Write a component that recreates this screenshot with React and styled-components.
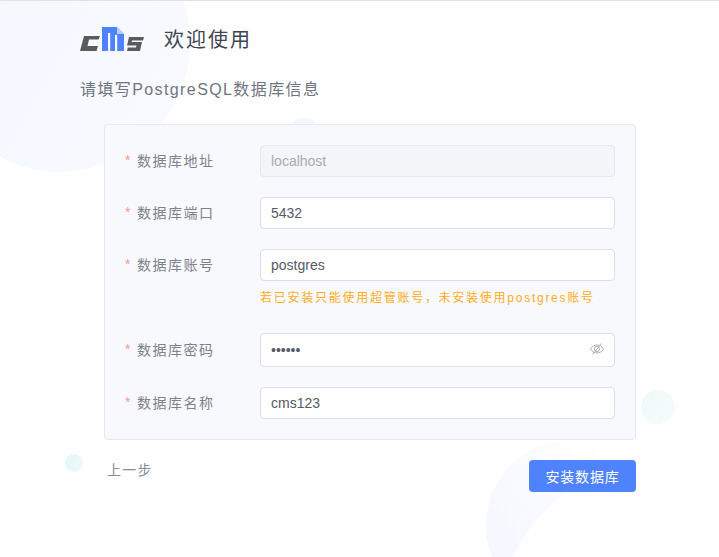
import React from "react";
import styled, { createGlobalStyle } from "styled-components";

const Global = createGlobalStyle`
  html, body { margin: 0; padding: 0; background: #fff; }
  body { font-family: "Liberation Sans", "Noto Sans CJK SC", sans-serif; }
  * { box-sizing: border-box; }
`;

const Page = styled.div`
  position: relative;
  width: 719px;
  height: 557px;
  overflow: hidden;
  background: #fff;
  border-top: 1px solid #e2e2e2;
`;

const Blob = styled.div`
  position: absolute;
  left: ${(p) => p.$x - p.$r}px;
  top: ${(p) => p.$y - p.$r - 1}px;
  width: ${(p) => p.$r * 2}px;
  height: ${(p) => p.$r * 2}px;
  border-radius: 50%;
  background: ${(p) => p.$bg};
`;

const Content = styled.div`
  position: relative;
  display: flex;
  flex-direction: column;
  padding: 24px 83px 0 80px;
`;

const Head = styled.header`
  display: flex;
  align-items: center;
  gap: 20px;
  height: 28px;
`;

const Title = styled.h1`
  margin: 2px 0 0;
  font-size: 20px;
  font-weight: 400;
  letter-spacing: 2px;
  color: #3f4450;
  line-height: 28px;
`;

const Sub = styled.h2`
  margin: 25px 0 0;
  font-size: 16px;
  font-weight: 400;
  letter-spacing: 1.4px;
  line-height: 24px;
  color: #6f7580;
`;

const Card = styled.section`
  margin: 22px 0 0 24px;
  width: 532px;
  height: 316px;
  padding: 20px 20px 0;
  display: flex;
  flex-direction: column;
  background: #f8f9fd;
  border: 1px solid #e6e8ef;
  border-radius: 4px;
`;

const Row = styled.div`
  display: flex;
  align-items: flex-start;
  margin-bottom: ${(p) => p.$mb}px;
`;

const Label = styled.label`
  width: 135px;
  flex: none;
  display: flex;
  align-items: center;
  height: ${(p) => p.$h || 30}px;
  font-size: 14px;
  letter-spacing: 1.5px;
  color: #7d828c;
  &::before {
    content: "*";
    color: #f89898;
    width: 12px;
    font-size: 14px;
    letter-spacing: 0;
    font-family: "Liberation Sans", sans-serif;
  }
`;

const Control = styled.div`
  width: 355px;
  flex: none;
  position: relative;
`;

const Input = styled.input`
  display: block;
  width: 100%;
  height: ${(p) => p.$h || 32}px;
  padding: 0 10px;
  border: 1px solid ${(p) => (p.disabled ? "#e4e7ed" : "#dcdfe8")};
  border-radius: 4px;
  outline: none;
  background: ${(p) => (p.disabled ? "#f4f5f8" : "#fff")};
  color: ${(p) => (p.disabled ? "#a8abb2" : "#555a66")};
  font-family: "Liberation Sans", "Noto Sans CJK SC", sans-serif;
  font-size: 14px;
`;

const Eye = styled.svg`
  position: absolute;
  right: 11px;
  top: 9px;
  width: 14px;
  height: 14px;
  fill: none;
  stroke: #aeb0b5;
  stroke-width: 1;
`;

const Hint = styled.p`
  margin: 8px 0 0;
  height: 18px;
  font-size: 12px;
  line-height: 18px;
  letter-spacing: 1.74px;
  color: #fdac22;
  white-space: nowrap;
`;

const Footer = styled.footer`
  margin: 20px 0 0 24px;
  width: 532px;
  display: flex;
  justify-content: space-between;
  align-items: flex-start;
`;

const Back = styled.a`
  margin: 0 0 0 3px;
  font-size: 14px;
  line-height: 20px;
  letter-spacing: 1.2px;
  color: #8a8d93;
`;

const Primary = styled.button`
  width: 107px;
  height: 32px;
  padding: 0;
  border: 0;
  border-radius: 4px;
  background: #4e83fd;
  color: #fff;
  font-family: "Liberation Sans", "Noto Sans CJK SC", sans-serif;
  font-size: 14px;
  letter-spacing: 0.8px;
`;

const Logo = () => (
  <svg width="64" height="24" viewBox="0 0 64 24" aria-hidden="true">
    <path d="M4 9h16l-1.500 3.500H9L7.500 19H18l-1.500 5H0z" fill="#5b5b5d" />
    <path d="M22 0h15l7 7v17H22z" fill="#4e83fd" />
    <path d="M37 0l7 7h-7z" fill="#b9d0fc" />
    <path d="M28 6h2.200v18H28zM35 8h2.200v16H35z" fill="#fff" />
    <path d="M49 10h15l-1 3.500H52l-.4 1.500H62l-2 9H47l.8-3.500H56l.4-2H47z" fill="#5b5b5d" />
  </svg>
);

const EyeOff = () => (
  <Eye viewBox="0 0 14 14" aria-hidden="true">
    <path d="M.5 7C2 4.300 4.300 3 7 3s5 1.300 6.500 4C12 9.700 9.700 11 7 11S2 9.700.5 7z" />
    <circle cx="7" cy="7" r="2.600" />
    <path d="M11.500 1.500L2.500 12.500" />
  </Eye>
);

export default function App() {
  return (
    <Page>
      <Global />
      <Blob $x={60} $y={42} $r={130} $bg="linear-gradient(120deg,#f3f7ff,#f8faff)" />
      <Blob $x={304} $y={135} $r={17} $bg="#f0faf9" />
      <Blob $x={658} $y={407} $r={17} $bg="linear-gradient(135deg,#eefaf8,#f6fcfc)" />
      <Blob $x={74} $y={463} $r={9} $bg="linear-gradient(135deg,#e2f6f5,#f0fafa)" />
      <Blob $x={571} $y={525} $r={85} $bg="linear-gradient(55deg,#f6f8ff 25%,#ffffff 80%)" />
      <Blob $x={680} $y={640} $r={187} $bg="linear-gradient(180deg,#fefeff,#fdfdff)" />
      <Content>
        <Head>
          <Logo />
          <Title>欢迎使用</Title>
        </Head>
        <Sub>请填写PostgreSQL数据库信息</Sub>
        <Card>
          <Row $mb={20}>
            <Label>数据库地址</Label>
            <Control><Input disabled value="localhost" readOnly /></Control>
          </Row>
          <Row $mb={20}>
            <Label>数据库端口</Label>
            <Control><Input value="5432" readOnly /></Control>
          </Row>
          <Row $mb={26}>
            <Label>数据库账号</Label>
            <Control>
              <Input value="postgres" readOnly />
              <Hint>若已安装只能使用超管账号，未安装使用postgres账号</Hint>
            </Control>
          </Row>
          <Row $mb={20}>
            <Label $h={31}>数据库密码</Label>
            <Control>
              <Input $h={34} type="password" value="123456" readOnly />
              <EyeOff />
            </Control>
          </Row>
          <Row $mb={0}>
            <Label>数据库名称</Label>
            <Control><Input value="cms123" readOnly /></Control>
          </Row>
        </Card>
        <Footer>
          <Back>上一步</Back>
          <Primary>安装数据库</Primary>
        </Footer>
      </Content>
    </Page>
  );
}
